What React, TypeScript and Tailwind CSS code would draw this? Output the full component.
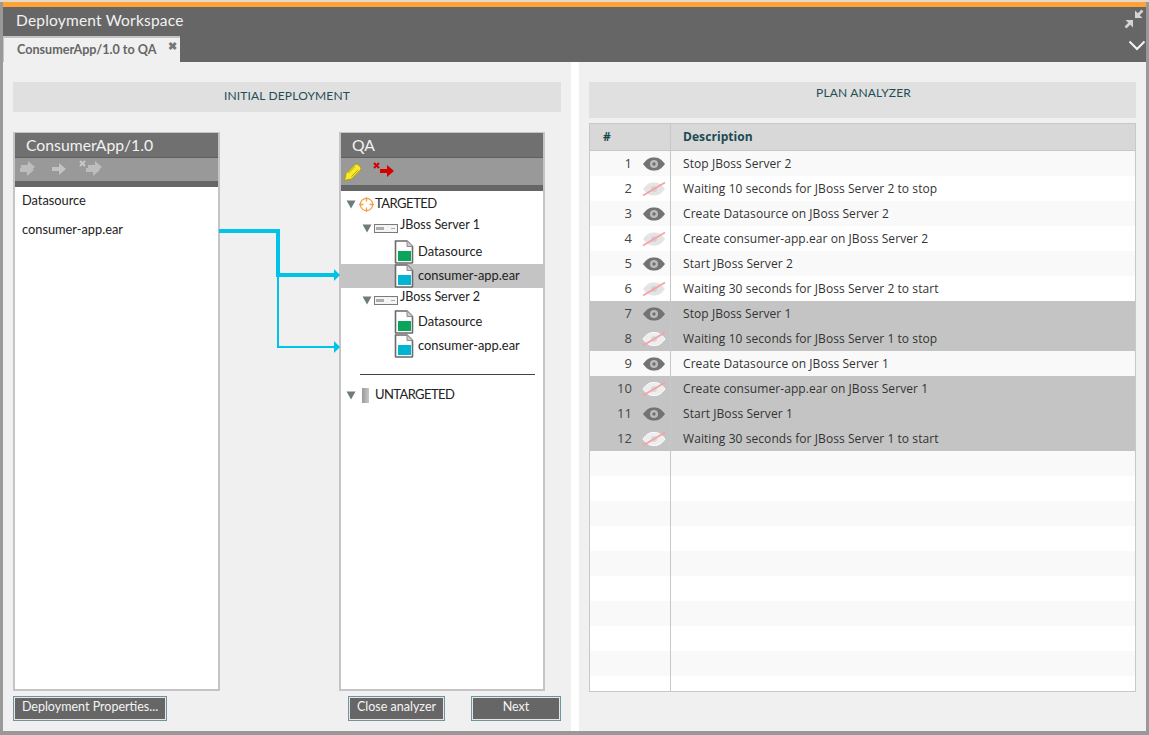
import React from "react";

const rows: [string, boolean][] = [
  ["Stop JBoss Server 2", false],
  ["Waiting 10 seconds for JBoss Server 2 to stop", false],
  ["Create Datasource on JBoss Server 2", false],
  ["Create consumer-app.ear on JBoss Server 2", false],
  ["Start JBoss Server 2", false],
  ["Waiting 30 seconds for JBoss Server 2 to start", false],
  ["Stop JBoss Server 1", true],
  ["Waiting 10 seconds for JBoss Server 1 to stop", true],
  ["Create Datasource on JBoss Server 1", false],
  ["Create consumer-app.ear on JBoss Server 1", true],
  ["Start JBoss Server 1", true],
  ["Waiting 30 seconds for JBoss Server 1 to start", true],
];

function Eye({ off, light }: { off?: boolean; light?: boolean }) {
  if (off) {
    return (
      <svg width="24" height="16" viewBox="0 0 24 16">
        <path d="M1 8 C5 2.5 8 1.5 12 1.5 C16 1.5 19 2.5 23 8 C19 13.5 16 14.5 12 14.5 C8 14.5 5 13.5 1 8 Z" fill={light ? "#eeeeee" : "#e4e4e4"} stroke={light ? "#ffffff" : "none"} />
        <circle cx="12" cy="8" r="3" fill={light ? "#d8d8d8" : "#d2d2d2"} />
        <path d="M1 14.5 L23 1.5" stroke="#f7a0a6" strokeWidth="1.6" />
      </svg>
    );
  }
  return (
    <svg width="24" height="16" viewBox="0 0 24 16">
      <path d="M1 8 C5 2.5 8 1.5 12 1.5 C16 1.5 19 2.5 23 8 C19 13.5 16 14.5 12 14.5 C8 14.5 5 13.5 1 8 Z" fill="#737373" />
      <circle cx="12" cy="8" r="4" fill="#bcbcbc" />
      <circle cx="12" cy="8" r="1.7" fill="#707070" />
    </svg>
  );
}

function Doc({ color }: { color: string }) {
  return (
    <svg width="20" height="24" viewBox="0 0 20 24" className="shrink-0">
      <path d="M1.5 1 H13 L18.5 6.5 V22.5 Q18.5 23 18 23 H2 Q1.5 23 1.5 22.5 Z" fill="#ffffff" stroke="#6a6a6a" strokeWidth="1.6" />
      <path d="M13 1 V6.5 H18.5" fill="#cfcfcf" stroke="#8a8a8a" strokeWidth="1" />
      <rect x="4" y="11" width="13" height="10" fill={color} />
    </svg>
  );
}

function Caret() {
  return (
    <svg width="10" height="9" viewBox="0 0 10 9" className="shrink-0">
      <path d="M0.5 0.5 H9.5 L5 8.5 Z" fill="#6e7c7c" />
    </svg>
  );
}

function Target() {
  return (
    <svg width="15" height="15" viewBox="0 0 15 15" className="shrink-0">
      <circle cx="7.5" cy="7.5" r="6.2" fill="none" stroke="#f5a04a" strokeWidth="1.3" />
      <path d="M7.5 0 V4.5 M7.5 10.5 V15 M0 7.5 H4.5 M10.5 7.5 H15" stroke="#f5a04a" strokeWidth="1.3" />
    </svg>
  );
}

function Server() {
  return (
    <svg width="24" height="9" viewBox="0 0 24 9" className="shrink-0">
      <rect x="0.5" y="0.5" width="23" height="8" fill="#f4f4f4" stroke="#7a7a7a" />
      <path d="M3 3 V6 M5 3 V6 M7 3 V6 M9 3 V6" stroke="#666666" strokeWidth="1" />
      <path d="M17 4.5 H21" stroke="#aaaaaa" strokeWidth="1" />
    </svg>
  );
}

function BlockArrow({ color, x = 0, y = 0 }: { color: string; x?: number; y?: number }) {
  return (
    <path transform={`translate(${x} ${y})`} d="M0 4 H7 V0 L14 6 L7 12 V8 H0 Z" fill={color} />
  );
}

function Cross({ color, x, y }: { color: string; x: number; y: number }) {
  return (
    <path transform={`translate(${x} ${y})`} d="M1 1 L6 6 M6 1 L1 6" stroke={color} strokeWidth="2" />
  );
}

function Tool({ w, children }: { w: number; children: React.ReactNode }) {
  return (
    <svg width={w} height="16" viewBox={`0 0 ${w} 16`} className="shrink-0 -mt-[3px]">
      {children}
    </svg>
  );
}

function Btn({ label, w }: { label: string; w: string }) {
  return (
    <button className={`${w} h-[25px] pb-[2px] bg-[#666666] text-[#f4f4f4] text-[12.5px] border border-[#6f94a0] outline outline-1 -outline-offset-2 outline-[#e6e6e6] flex items-center justify-center`}>
      {label}
    </button>
  );
}

function TreeDoc({ label, color, selected, h }: { label: string; color: string; selected?: boolean; h: string }) {
  return (
    <div className={`${h} flex items-center pl-[53px] gap-[4px] ${selected ? "bg-[#c4c4c4]" : ""}`}>
      <Doc color={color} />
      <span className="text-[12.9px] text-[#222222]">{label}</span>
    </div>
  );
}

export default function App() {
  return (
    <div className="w-[1149px] h-[735px] flex flex-col bg-[#999999] overflow-hidden font-['Lato','Noto_Sans',sans-serif]">
      <div className="h-[2px] bg-[#e4d9c8]" />
      <div className="h-[5px] bg-[#ffa336] mr-[3px] ml-[3px]" />
      <div className="relative mx-[3px] h-[55px] bg-[#666666] flex flex-col">
        <div className="h-[29px] pl-[13px] pb-[2px] flex items-center text-[15.5px] tracking-[0.2px] text-[#f2f2f2]">Deployment Workspace</div>
        <div className="relative w-[177px] h-[26px] bg-[#f0f0f0] border-t-2 border-l border-[#c4c4c4] text-[12.6px] font-bold text-[#666666] pl-[13px] flex items-center">
          ConsumerApp/1.0 to QA
          <span className="absolute right-[3px] top-[2px] text-[11px] leading-[12px] text-[#777777]">✖</span>
        </div>
        <svg width="20" height="20" viewBox="0 0 20 20" className="absolute right-[2px] top-[2px]">
          <path d="M18.5 1.5 L13 7" fill="none" stroke="#d4d4d4" strokeWidth="2.6" />
          <path d="M11 1.5 V9 H18.5 Z" fill="#d4d4d4" />
          <path d="M1.5 18.5 L7 13" fill="none" stroke="#d4d4d4" strokeWidth="2.6" />
          <path d="M1.5 11 H9 V18.5 Z" fill="#d4d4d4" />
        </svg>
        <svg width="18" height="11" viewBox="0 0 18 11" className="absolute right-0 top-[33px]">
          <path d="M1.5 1.5 L9 9 L16.5 1.5" fill="none" stroke="#f4f4f4" strokeWidth="2" />
        </svg>
      </div>

      <div className="flex-1 mx-[3px] mb-[4px] flex bg-[#f0f0f0] min-h-0">
        {/* left */}
        <div className="relative w-[568px] flex flex-col pl-[10px] pr-[10px] pt-[20px]">
          <div className="h-[30px] pb-[2px] bg-[#e0e0e0] flex items-center justify-center text-[12px] tracking-[0.15px] text-[#1f4e55]">INITIAL DEPLOYMENT</div>

          <div className="mt-[20px] flex h-[559px]">
            <div className="w-[207px] flex flex-col border-2 border-t border-[#c4c4c4]">
              <div className="h-[25px] bg-[#707070] border-b border-[#5f5f5f] pl-[11px] flex items-center text-[15.75px] text-[#f2f2f2]">ConsumerApp/1.0</div>
              <div className="h-[23px] bg-[#999999] flex items-center pl-[4px]">
                <Tool w={16}><BlockArrow color="#bdbdbd" x={1} y={4} /><BlockArrow color="#bdbdbd" x={2} y={1} /></Tool>
                <div className="w-[17px]" />
                <Tool w={16}><BlockArrow color="#c2c2c2" y={3} /></Tool>
                <div className="w-[11px]" />
                <Tool w={24}><Cross color="#c8c8c8" x={0} y={0} /><BlockArrow color="#bdbdbd" x={7} y={4} /><BlockArrow color="#bdbdbd" x={9} y={1} /></Tool>
              </div>
              <div className="h-[6px] bg-[#666666]" />
              <div className="flex-1 bg-white pl-[7px] pt-[3px] text-[12.8px] text-[#222222]">
                <div className="h-[22px] flex items-center">Datasource</div>
                <div className="h-[36px] flex items-center">consumer-app.ear</div>
              </div>
            </div>

            <div className="w-[206px] ml-[119px] flex flex-col border-2 border-t border-[#c4c4c4]">
              <div className="h-[25px] bg-[#707070] border-b border-[#5f5f5f] pl-[11px] flex items-center text-[15.75px] text-[#f2f2f2]">QA</div>
              <div className="h-[27px] bg-[#999999] flex items-center pl-[3px] gap-[11px]">
                <svg width="18" height="18" viewBox="0 0 18 18" className="shrink-0">
                  <path d="M0.5 17.5 L2 10.5 L11 1.5 Q12.5 0.5 14 1.5 L16.5 4 Q17.5 5.5 16.5 7 L7.5 16 Z" fill="#f7ea2a" stroke="#a89a10" strokeWidth="1" />
                  <path d="M4.5 10 L11 3.5 M7.5 13.5 L14 7" stroke="#b5a814" strokeWidth="1" />
                </svg>
                <Tool w={22}><Cross color="#d40000" x={0} y={0} /><BlockArrow color="#d40000" x={7} y={3} /></Tool>
              </div>
              <div className="h-[6px] bg-[#666666]" />
              <div className="flex-1 bg-white text-[12.5px] text-[#222222]">
                <div className="h-[23px] pt-[4px] flex items-center pl-[5px] gap-[3px] text-[13px] tracking-[-0.5px]">
                  <Caret /><Target /><span className="-ml-[2px] -mt-[2px]">TARGETED</span>
                </div>
                <div className="h-[24px] pt-[4px] flex items-center pl-[21px] gap-[2px]">
                  <Caret /><Server /><span className="-mt-[5px]">JBoss Server 1</span>
                </div>
                <div className="h-[2px]" />
                <TreeDoc label="Datasource" color="#0aa55a" h="h-[24px]" />
                <TreeDoc label="consumer-app.ear" color="#00b4d2" selected h="h-[24px]" />
                <div className="h-[20px] pt-[4px] flex items-center pl-[21px] gap-[2px]">
                  <Caret /><Server /><span className="-mt-[5px]">JBoss Server 2</span>
                </div>
                <div className="h-[2px]" />
                <TreeDoc label="Datasource" color="#0aa55a" h="h-[24px]" />
                <TreeDoc label="consumer-app.ear" color="#00b4d2" h="h-[24px]" />
                <div className="h-[16px]" />
                <div className="ml-[19px] mr-[8px] h-px bg-[#444444]" />
                <div className="h-[9px]" />
                <div className="h-[22px] flex items-center pl-[5px] text-[13px] tracking-[-0.6px]">
                  <Caret />
                  <div className="w-[7px] h-[15px] ml-[6px] mr-[6px] bg-gradient-to-r from-[#999999] to-[#c8c8c8]" />
                  <span>UNTARGETED</span>
                </div>
              </div>
            </div>
          </div>

          <svg width="130" height="130" viewBox="0 0 130 130" className="absolute left-[216px] top-[163px]">
            <path d="M0 6 H59 V50 H116" fill="none" stroke="#00c3e8" strokeWidth="4" />
            <path d="M59 50 V122 H116" fill="none" stroke="#00c3e8" strokeWidth="2" />
            <path d="M115 44 L121 50 L115 56 Z" fill="#00c3e8" />
            <path d="M115 116 L121 122 L115 128 Z" fill="#00c3e8" />
          </svg>

          <div className="mt-[5px] flex">
            <Btn label="Deployment Properties..." w="w-[154px]" />
            <div className="w-[181px]" />
            <Btn label="Close analyzer" w="w-[97px]" />
            <div className="w-[26px]" />
            <Btn label="Next" w="w-[90px]" />
          </div>
        </div>

        <div className="w-[8px] bg-white" />

        {/* right */}
        <div className="flex-1 flex flex-col pl-[10px] pr-[10px] pt-[20px]">
          <div className="h-[36px] bg-[#e0e0e0] flex justify-center pt-[2px] pl-[2px] text-[12px] tracking-[0.15px] text-[#1f4e55]">PLAN ANALYZER</div>
          <div className="mt-[5px] h-[569px] border border-[#c6c9cc] bg-white flex flex-col font-['Open_Sans',sans-serif] text-[12px] tracking-[0.07px] text-[#333333]">
            <div className="h-[27px] shrink-0 flex bg-[#d8d8d8] border-b border-[#c6c9cc] font-bold text-[#1a4a52]">
              <div className="w-[81px] pl-[13px] flex items-center border-r border-[#c6c9cc]">#</div>
              <div className="flex-1 pl-[12px] flex items-center">Description</div>
            </div>
            {rows.map(([text, sel], i) => {
              const odd = i % 2 === 0;
              const eyeOff = i % 2 === 1;
              return (
                <div key={i} className={`h-[25px] shrink-0 flex ${sel ? "bg-[#c4c4c4]" : odd ? "bg-[#f9f9f9]" : "bg-white"}`}>
                  <div className="w-[81px] flex items-center border-r border-[#c6c9cc]">
                    <span className="w-[42px] text-right text-[13px] text-[#444444]">{i + 1}</span>
                    <span className="ml-[10px] flex"><Eye off={eyeOff} light={sel} /></span>
                  </div>
                  <div className="flex-1 pl-[12px] flex items-center">{text}</div>
                </div>
              );
            })}
            <div className="flex-1 min-h-0 overflow-hidden">
              {Array.from({ length: 10 }).map((_, i) => (
                <div key={i} className={`h-[25px] flex ${i % 2 === 0 ? "bg-[#f9f9f9]" : "bg-white"}`}>
                  <div className="w-[81px] border-r border-[#c6c9cc]" />
                </div>
              ))}
            </div>
          </div>
        </div>
      </div>
    </div>
  );
}
